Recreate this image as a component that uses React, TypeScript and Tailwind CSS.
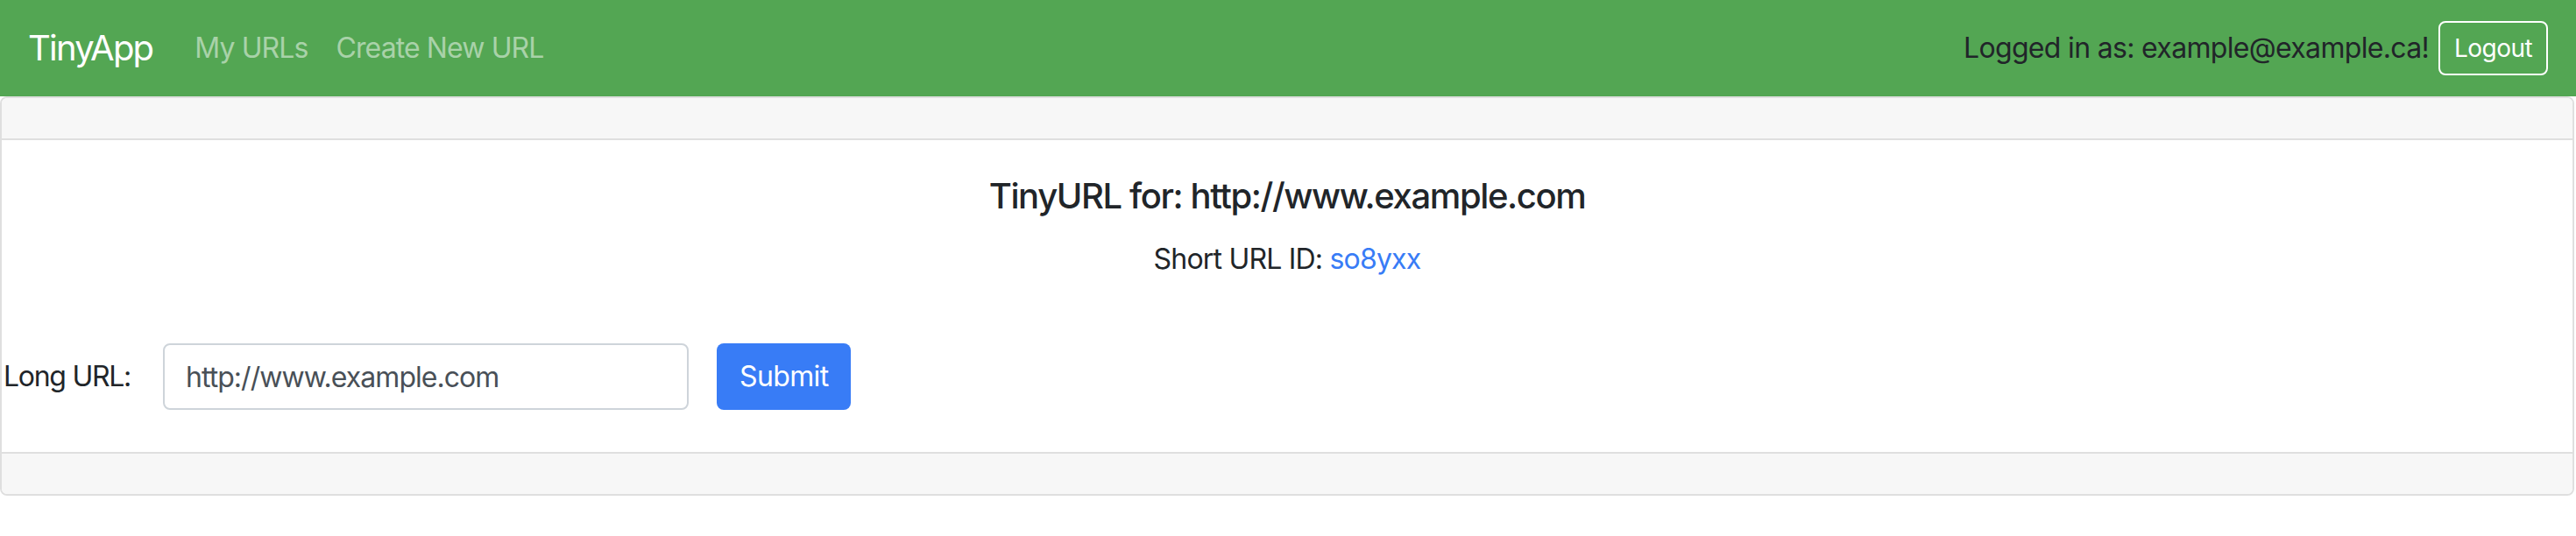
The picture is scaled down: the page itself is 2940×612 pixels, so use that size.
import React from "react";

export default function App() {
  return (
    <div className="w-[2940px] min-h-[612px] bg-white font-['Inter','Helvetica_Neue',Arial,sans-serif] text-[#212529] tracking-[-0.042em]">
      <nav className="flex h-[110px] items-center justify-between bg-[#53a653] px-[32px]">
        <div className="flex items-center">
          <a className="mr-[32px] text-[40px] leading-[60px] tracking-[-0.045em] text-white">TinyApp</a>
          <a className="px-[16px] text-[32px] leading-[48px] tracking-[-0.028em] text-white/50">My URLs</a>
          <a className="px-[16px] text-[32px] leading-[48px] tracking-[-0.028em] text-white/50">Create New URL</a>
        </div>
        <div className="flex items-center">
          <span className="text-[32px] leading-[48px] text-[#212529]">Logged in as: example@example.ca!</span>
          <button className="ml-[11px] flex h-[62px] items-center rounded-[8px] border-2 border-white px-[16px] text-[28px] leading-[42px] tracking-[-0.02em] text-white">
            Logout
          </button>
        </div>
      </nav>
      <div className="mr-[2px] rounded-[8px] border-2 border-[#dfdfdf]">
        <div className="h-[48px] rounded-t-[6px] border-b-2 border-[#dfdfdf] bg-[#f7f7f7]" />
        <div className="pt-[40px] pb-[48px]">
          <h5 className="text-center text-[40px] font-medium leading-[48px] tracking-[-0.035em]">TinyURL for: http://www.example.com</h5>
          <p className="mt-[24px] text-center text-[32px] leading-[48px] tracking-[-0.025em]">
            Short URL ID: <a className="text-[#387cf6]">so8yxx</a>
          </p>
          <form className="mt-[72px] flex items-center pl-[2px]">
            <label className="w-[150px] shrink-0 text-[32px] leading-[48px] tracking-[-0.04em]">Long URL:</label>
            <input
              className="ml-[32px] h-[76px] w-[600px] rounded-[8px] border-2 border-[#ced4da] px-[24px] text-[32px] tracking-[-0.03em] text-[#495057] outline-none"
              defaultValue="http://www.example.com"
            />
            <button
              type="button"
              className="ml-[32px] h-[76px] rounded-[8px] bg-[#387cf6] px-[26px] text-[32px] leading-[48px] tracking-[-0.02em] text-white"
            >
              Submit
            </button>
          </form>
        </div>
        <div className="h-[48px] rounded-b-[6px] border-t-2 border-[#dfdfdf] bg-[#f7f7f7]" />
      </div>
    </div>
  );
}
